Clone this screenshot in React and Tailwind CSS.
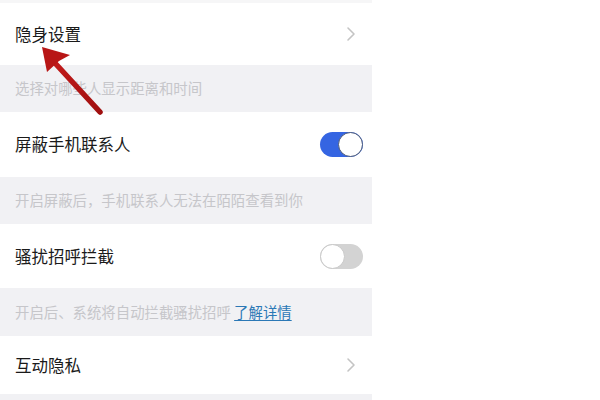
import React from "react";

const font = { fontFamily: '"Noto Sans CJK SC", "Noto Sans", sans-serif' };

function Chevron() {
  return (
    <svg width="10" height="16" viewBox="0 0 10 16" className="mr-[16px]">
      <path d="M2 2 L8 8 L2 14" fill="none" stroke="#c4c4c4" strokeWidth="1.6" strokeLinecap="round" strokeLinejoin="round" />
    </svg>
  );
}

function ToggleOn() {
  return (
    <div className="mr-[9px] w-[43px] h-[25px] rounded-full bg-[#3565e2] flex items-center justify-end">
      <div className="w-[25px] h-[25px] rounded-full bg-white border-[1.5px] border-[#4b5a7a]" />
    </div>
  );
}

function ToggleOff() {
  return (
    <div className="mr-[9px] w-[43px] h-[25px] rounded-full bg-[#d3d3d3] flex items-center justify-start">
      <div className="w-[25px] h-[25px] rounded-full bg-white border border-[#c8c8c8]" />
    </div>
  );
}

function Row({ title, h, right }) {
  return (
    <div className={`flex items-center justify-between bg-white pl-[15px] ${h}`}>
      <span className="text-[16.5px] text-[#1a1a1a] leading-none">{title}</span>
      {right}
    </div>
  );
}

function Note({ children, h }) {
  return (
    <div className={`flex items-center bg-[#f1f1f4] pl-[15px] ${h}`}>
      <span className="text-[14.4px] text-[#c6c6ca] leading-none">{children}</span>
    </div>
  );
}

export default function App() {
  return (
    <div className="relative w-[600px] h-[400px] bg-white overflow-hidden" style={font}>
      <div className="w-[372px] flex flex-col">
        <div className="h-[3px] bg-[#f6f6f7]" />
        <Row title="隐身设置" h="h-[62px]" right={<Chevron />} />
        <Note h="h-[47px]">选择对哪些人显示距离和时间</Note>
        <Row title="屏蔽手机联系人" h="h-[65px]" right={<ToggleOn />} />
        <Note h="h-[47px]">开启屏蔽后，手机联系人无法在陌陌查看到你</Note>
        <Row title="骚扰招呼拦截" h="h-[64px]" right={<ToggleOff />} />
        <Note h="h-[48px]">
          开启后、系统将自动拦截骚扰招呼{" "}
          <span className="text-[#2b78b6] underline underline-offset-2">了解详情</span>
        </Note>
        <Row title="互动隐私" h="h-[58px]" right={<Chevron />} />
        <div className="h-[6px] bg-[#f1f1f4]" />
      </div>
      <svg className="absolute left-0 top-0" width="600" height="400" viewBox="0 0 600 400">
        <defs>
          <linearGradient id="ar" x1="0" y1="0" x2="1" y2="1">
            <stop offset="0" stopColor="#c21a1a" />
            <stop offset="1" stopColor="#a01010" />
          </linearGradient>
        </defs>
        <line x1="54" y1="62" x2="100" y2="112" stroke="url(#ar)" strokeWidth="5.5" strokeLinecap="round" />
        <polygon points="42,47 70,55 59,61 47,72" fill="#b81616" />
      </svg>
    </div>
  );
}
